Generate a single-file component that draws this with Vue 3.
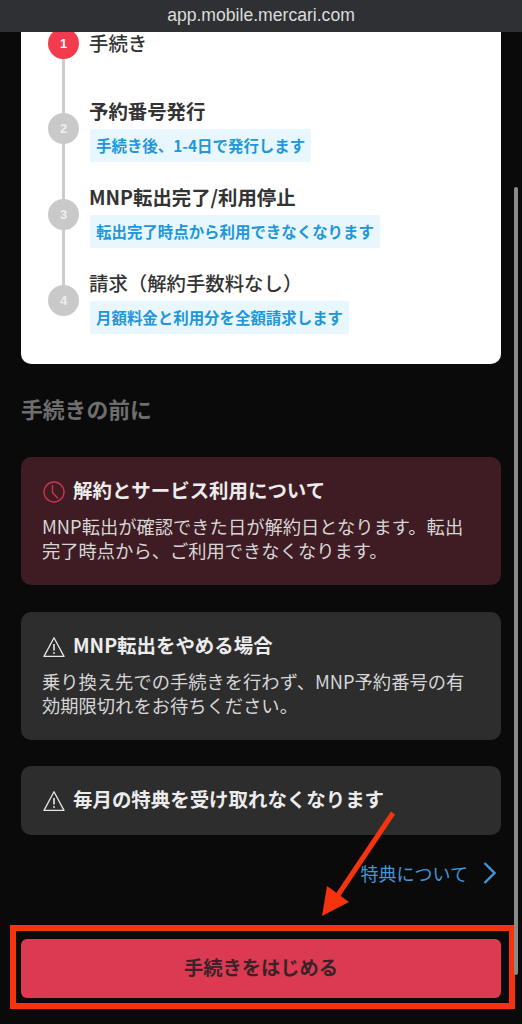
<script setup>
const steps = [
  { n: 1, title: '手続き', note: '', active: true },
  { n: 2, title: '予約番号発行', note: '手続き後、1-4日で発行します', strong: true },
  { n: 3, title: 'MNP転出完了/利用停止', note: '転出完了時点から利用できなくなります', strong: true },
  { n: 4, title: '請求（解約手数料なし）', note: '月額料金と利用分を全額請求します' },
]
</script>

<template>
  <div class="page">
    <header class="url-bar">app.mobile.mercari.com</header>
    <main class="content">
      <section class="timeline-card">
        <ol class="steps">
          <li v-for="s in steps" :key="s.n" class="step" :class="{ first: s.active, strong: s.strong }">
            <span class="marker" :class="{ active: s.active }">{{ s.n }}</span>
            <div class="step-body">
              <div class="step-title">{{ s.title }}</div>
              <div v-if="s.note" class="step-note">{{ s.note }}</div>
            </div>
          </li>
        </ol>
      </section>

      <h2 class="section-title">手続きの前に</h2>

      <section class="notice danger">
        <h3 class="notice-title">
          <svg class="icon" viewBox="0 0 22 22" fill="none" stroke="#c8354a" stroke-width="1.4">
            <circle cx="11" cy="11" r="10" />
            <path d="M9.5 4.5V11.5L14.5 17" stroke-linecap="round" stroke-linejoin="round" />
          </svg>
          解約とサービス利用について
        </h3>
        <p class="notice-text">MNP転出が確認できた日が解約日となります。転出完了時点から、ご利用できなくなります。</p>
      </section>

      <section class="notice">
        <h3 class="notice-title">
          <svg class="icon" viewBox="0 0 22 22" fill="none" stroke="#e6e6e6" stroke-width="1.3">
            <path d="M11 1.8L21 20.4H1Z" stroke-linejoin="round" />
            <path d="M11 8V14.6" stroke-width="1.6" />
            <circle cx="11" cy="17" r="0.9" fill="#e6e6e6" stroke="none" />
          </svg>
          MNP転出をやめる場合
        </h3>
        <p class="notice-text">乗り換え先での手続きを行わず、MNP予約番号の有効期限切れをお待ちください。</p>
      </section>

      <section class="notice compact">
        <h3 class="notice-title">
          <svg class="icon" viewBox="0 0 22 22" fill="none" stroke="#e6e6e6" stroke-width="1.3">
            <path d="M11 1.8L21 20.4H1Z" stroke-linejoin="round" />
            <path d="M11 8V14.6" stroke-width="1.6" />
            <circle cx="11" cy="17" r="0.9" fill="#e6e6e6" stroke="none" />
          </svg>
          毎月の特典を受け取れなくなります
        </h3>
      </section>

      <a class="link">
        特典について
        <svg class="chevron" viewBox="0 0 13 22" fill="none" stroke="#3f97d6" stroke-width="2.4">
          <path d="M1.5 1L11.5 11L1.5 21" />
        </svg>
      </a>

      <button class="cta">手続きをはじめる</button>
    </main>

    <div class="callout-box"></div>
    <svg class="callout-arrow" viewBox="0 0 76 108">
      <path d="M72 2L17 84" stroke="#f5330f" stroke-width="5" fill="none" />
      <path d="M1 105L6 75L28 91Z" fill="#f5330f" />
    </svg>

    <div class="scrollbar"></div>
  </div>
</template>

<style>
html, body { margin: 0; background: #0a0a0a; }
</style>

<style scoped>
.page {
  position: relative;
  width: 522px;
  height: 1024px;
  overflow: hidden;
  background: #0a0a0a;
  font-family: "Noto Sans CJK JP", "Noto Sans", sans-serif;
}
.url-bar {
  position: relative;
  z-index: 1;
  height: 32px;
  background: #2e3033;
  color: #dcdcdc;
  font-family: "Liberation Sans", Arial, sans-serif;
  font-size: 17.6px;
  line-height: 30px;
  text-align: center;
}
.content {
  padding: 0 21px;
}
.timeline-card {
  display: flow-root;
  background: #fff;
  border-radius: 0 0 10px 10px;
  height: 332px;
}
.steps {
  position: relative;
  list-style: none;
  margin: -8px 0 0;
  padding: 0 0 0 27px;
  display: flex;
  flex-direction: column;
  gap: 16px;
}
.steps::before {
  content: "";
  position: absolute;
  left: 41px;
  top: 20px;
  height: 257px;
  width: 3px;
  background: #cccccc;
}
.step {
  display: flex;
  gap: 11px;
  height: 70px;
}
.step.first {
  height: 52px;
}
.marker {
  position: relative;
  flex: none;
  width: 31px;
  height: 31px;
  margin-top: 21px;
  border-radius: 50%;
  background: #c9c9c9;
  color: #eeeeee;
  font-family: "Liberation Sans", Arial, sans-serif;
  font-size: 13px;
  font-weight: 700;
  line-height: 31px;
  text-align: center;
}
.marker.active {
  margin-top: 4px;
  background: #f23b4c;
  color: #fff;
}
.step-body {
  display: flex;
  flex-direction: column;
  align-items: flex-start;
}
.step-title {
  height: 37px;
  margin-left: -1px;
  color: #333333;
  font-size: 19.4px;
  font-weight: 500;
  line-height: 37px;
  white-space: nowrap;
}
.strong .step-title {
  font-weight: 700;
}
.first .step-title {
  height: 22px;
  margin-top: 8px;
  line-height: 22px;
}
.step-note {
  height: 33px;
  padding: 0 6px;
  background: #e8f7fe;
  border-radius: 2px;
  color: #2196d8;
  font-size: 15.45px;
  font-weight: 700;
  line-height: 33px;
  white-space: nowrap;
}
.section-title {
  margin: 31px 0 34px;
  color: #6e6e6e;
  font-size: 21.8px;
  font-weight: 700;
  line-height: 28px;
}
.notice {
  box-sizing: border-box;
  height: 128px;
  margin-bottom: 27px;
  padding: 20px 22px 0 21px;
  background: #2d2d2d;
  border-radius: 10px;
}
.notice.danger {
  background: #3f1c23;
}
.notice.compact {
  height: 69px;
  margin-top: -1px;
  margin-bottom: 0;
}
.notice-title {
  display: flex;
  align-items: center;
  gap: 8px;
  margin: 0 0 0 1px;
  color: #ececec;
  font-size: 19.45px;
  font-weight: 700;
  line-height: 26px;
  white-space: nowrap;
}
.icon {
  flex: none;
  width: 22px;
  height: 22px;
  margin-top: 3px;
}
.notice-text {
  margin: 11px 0 0;
  color: #d6d6d6;
  font-size: 18.3px;
  line-height: 24px;
}
.link {
  display: flex;
  justify-content: flex-end;
  align-items: center;
  gap: 15px;
  height: 26px;
  margin-top: 25px;
  padding-right: 5px;
  color: #3f97d6;
  font-size: 18px;
  line-height: 24px;
}
.chevron {
  width: 13px;
  height: 22px;
}
.cta {
  display: block;
  width: 480px;
  height: 59px;
  margin-top: 53px;
  padding: 0 0 4px;
  border: 0;
  border-radius: 6px;
  background: #dc3a52;
  color: #3a2229;
  font-family: inherit;
  font-size: 19.3px;
  font-weight: 700;
}
.scrollbar {
  position: absolute;
  left: 514px;
  top: 187px;
  width: 4px;
  height: 788px;
  border-radius: 2px;
  background: #8a8a8a;
}
.callout-box {
  position: absolute;
  left: 10px;
  top: 925px;
  width: 493px;
  height: 72px;
  border: 6px solid #f5330f;
}
.callout-arrow {
  position: absolute;
  left: 321px;
  top: 811px;
  width: 76px;
  height: 108px;
}
</style>
